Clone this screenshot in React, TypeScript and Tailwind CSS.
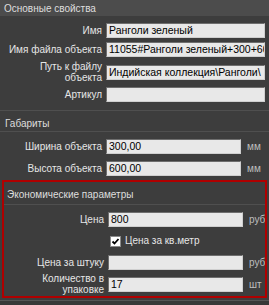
const font = { fontFamily: '"Liberation Sans", Arial, sans-serif' };

function Field({
  label,
  value = "",
  unit,
  wide = false,
  labelW = "w-[106px]",
}: {
  label: React.ReactNode;
  value?: string;
  unit?: string;
  wide?: boolean;
  labelW?: string;
}) {
  return (
    <div className="flex items-center">
      <div
        className={`${labelW} shrink-0 whitespace-nowrap pr-[4px] text-right text-[10px] leading-[11px] text-[#e6e6e6]`}
      >
        {label}
      </div>
      <div
        className={`${
          wide ? "w-[159px]" : "w-[135px]"
        } h-[15px] shrink-0 overflow-hidden whitespace-nowrap border-t border-l border-t-[#6e6e6e] border-l-[#6e6e6e] border-b border-r border-b-[#cfcfcf] border-r-[#cfcfcf] bg-[#e8e8e8] pl-[2px] text-[10.5px] leading-[13px] text-black`}
      >
        {value}
      </div>
      {unit ? (
        <div className="ml-[6px] whitespace-nowrap text-[10px] leading-[15px] text-[#bdbdbd]">
          {unit}
        </div>
      ) : null}
    </div>
  );
}

export default function App() {
  return (
    <div
      className="h-[305px] w-[269px] overflow-hidden bg-[#3d3d3d] text-[10px]"
      style={font}
    >
      <div className="flex h-[16px] items-center bg-[#4c4c4c] pl-[4px] text-[#dedede]">
        Основные свойства
      </div>

      <div className="flex flex-col gap-[4px] pb-[8px] pt-[7px]">
        <Field label="Имя" value="Ранголи зеленый" wide />
        <Field label="Имя файла объекта" value="11055#Ранголи зеленый+300+600" wide />
        <Field
          label={
            <>
              Путь к файлу
              <br />
              объекта
            </>
          }
          value="Индийская коллекция\Ранголи\"
          wide
        />
        <Field label="Артикул" wide />
      </div>

      <div className="flex h-[22px] items-center border-y border-[#4f4f4f] pl-[5px] pt-[5px] text-[#dedede]">
        Габариты
      </div>

      <div className="flex flex-col gap-[7px] pt-[7px]">
        <Field label="Ширина объекта" value="300,00" unit="мм" />
        <Field label="Высота объекта" value="600,00" unit="мм" />
      </div>

      <div className="mx-[2px] mt-[4px] h-[118px] overflow-hidden border-2 border-[#b00000]">
        <div className="flex h-[23px] items-end border-b border-[#4f4f4f] pb-[2px] pl-[3px] leading-[15px] text-[#dedede]">
          Экономические параметры
        </div>
        <div className="flex flex-col pt-[7px]">
          <Field label="Цена" value="800" unit="руб" labelW="w-[104px]" />
          <div className="mt-[8px] flex h-[12px] items-center pl-[106px]">
            <div className="flex h-[11px] w-[11px] items-center justify-center border border-[#8a8a8a] bg-white">
              <svg width="9" height="9" viewBox="0 0 9 9">
                <path d="M1.5 4.5 L3.5 6.5 L7.5 2" stroke="#000" strokeWidth="1.8" fill="none" />
              </svg>
            </div>
            <span className="ml-[4px] leading-[12px] text-[#e6e6e6]">Цена за кв.метр</span>
          </div>
          <div className="mt-[8px]">
            <Field label="Цена за штуку" unit="руб" labelW="w-[104px]" />
          </div>
          <div className="mt-[3px]">
            <Field
              label={
                <>
                  Количество в
                  <br />
                  упаковке
                </>
              }
              value="17"
              unit="шт"
              labelW="w-[104px]"
            />
          </div>
        </div>
      </div>

      <div className="mt-[2px] h-[5px] border-t border-[#555555] bg-[#383838]" />
    </div>
  );
}
